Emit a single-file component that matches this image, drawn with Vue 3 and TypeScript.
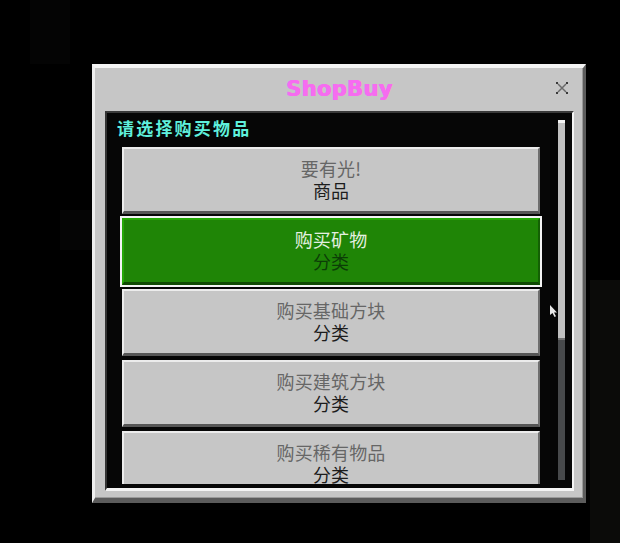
<script setup lang="ts">
interface Item { name: string; kind: string; active?: boolean }
const items: Item[] = [
  { name: '要有光!', kind: '商品' },
  { name: '购买矿物', kind: '分类', active: true },
  { name: '购买基础方块', kind: '分类' },
  { name: '购买建筑方块', kind: '分类' },
  { name: '购买稀有物品', kind: '分类' },
]
</script>

<template>
  <div class="page">
    <section class="dialog">
      <header class="titlebar">
        <h1 class="title">ShopBuy</h1>
        <svg class="close" width="14" height="14" viewBox="0 0 14 14" aria-label="关闭">
          <path d="M3 3l8 8M11 3l-8 8" stroke="#6a6a6a" stroke-width="1.500" fill="none" />
          <path d="M1 1h2v2H1zM11 1h2v2h-2zM1 11h2v2H1zM11 11h2v2h-2z" fill="#3a3a3a" />
        </svg>
      </header>
      <div class="frame">
        <div class="content">
          <div class="label">请选择购买物品</div>
          <div class="list">
            <button v-for="item in items" :key="item.name" class="row" :class="{ active: item.active }">
              <span class="name">{{ item.name }}</span>
              <span class="kind">{{ item.kind }}</span>
            </button>
          </div>
        </div>
        <div class="scrollbar">
          <div class="thumb"></div>
          <div class="track"></div>
        </div>
        <svg class="cursor" width="9" height="14" viewBox="0 0 9 14">
          <path d="M1 1v10l2.500-2 2 4 1.500-.7-2-3.800H8z" fill="#e8e8e8" />
        </svg>
      </div>
    </section>
  </div>
</template>

<style>
html, body { margin: 0; background: #000; }
</style>

<style scoped>
.page {
  width: 620px;
  height: 543px;
  padding: 64px 0 0 92px;
  box-sizing: border-box;
  overflow: hidden;
  background-color: #000;
  background-image:
    linear-gradient(#0b0b09, #0b0b09),
    linear-gradient(#040404, #040404),
    linear-gradient(#050505, #050505);
  background-repeat: no-repeat;
  background-size: 30px 263px, 40px 64px, 60px 40px;
  background-position: 590px 280px, 30px 0, 60px 210px;
  font-family: "Noto Sans CJK SC", "Liberation Sans", sans-serif;
}
.dialog {
  width: 494px;
  height: 439px;
  box-sizing: border-box;
  display: flex;
  flex-direction: column;
  background: #c6c6c6;
  border-top: 4px solid #f4f4f4;
  border-left: 3px solid #eeeeee;
  border-right: 3px solid #5c5c5c;
  border-bottom: 5px solid #5c5c5c;
  box-shadow: inset -1px -1px 0 #9a9a9a;
}
.titlebar {
  height: 43px;
  flex: none;
  display: flex;
  align-items: center;
  justify-content: center;
  position: relative;
}
.title {
  margin: 0 0 1px;
  font: bold 21px/24px "DejaVu Sans", sans-serif;
  letter-spacing: 0.300px;
  color: #f66cf0;
  text-shadow: 1px 0 0 #f66cf0;
}
.close {
  position: absolute;
  right: 14px;
  top: 13px;
}
.frame {
  flex: 1;
  min-height: 0;
  margin: 0 9px 7px 10px;
  display: flex;
  position: relative;
  background: #060606;
  border-top: 2px solid #3a3a3a;
  border-left: 2px solid #333333;
  border-right: 2px solid #f4f4f4;
  border-bottom: 3px solid #f4f4f4;
}
.content {
  flex: 1;
  min-width: 0;
  display: flex;
  flex-direction: column;
  padding-bottom: 4px;
}
.label {
  flex: none;
  height: 34px;
  padding-left: 10px;
  box-sizing: border-box;
  font-size: 17px;
  line-height: 30px;
  font-weight: 700;
  letter-spacing: 2.200px;
  color: #5ff0dc;
}
.list {
  flex: 1;
  min-height: 0;
  overflow: hidden;
  display: flex;
  flex-direction: column;
  gap: 4px;
  padding: 0 18px 0 15px;
}
.row {
  flex: none;
  height: 67px;
  width: 418px;
  box-sizing: border-box;
  padding: 0 0 3px;
  display: flex;
  flex-direction: column;
  align-items: center;
  justify-content: center;
  background: #c6c6c6;
  border-style: solid;
  border-width: 2px 2px 3px 2px;
  border-color: #ececec #6e6e6e #565656 #ececec;
  font-family: inherit;
  font-size: 18px;
  line-height: 22px;
}
.name { color: #666666; letter-spacing: 0.150px; }
.kind { color: #1c1c1c; }
.row.active {
  background: #1f8506;
  border-color: #25a806 #146004 #0f4a03 #25a806;
  box-shadow: 0 0 0 2px #f4f4f4;
}
.row.active .name { color: #e4f0e0; }
.row.active .kind { color: #0c3d06; }
.scrollbar {
  flex: none;
  width: 7px;
  margin: 7px 7px 8px 0;
  display: flex;
  flex-direction: column;
}
.thumb {
  height: 220px;
  flex: none;
  box-sizing: border-box;
  background: #c0c0c0;
  border-top: 3px solid #f2f2f2;
  border-bottom: 2px solid #707070;
}
.track {
  flex: 1;
  background: #47494b;
}
.cursor {
  position: absolute;
  left: 442px;
  top: 191px;
}
</style>
